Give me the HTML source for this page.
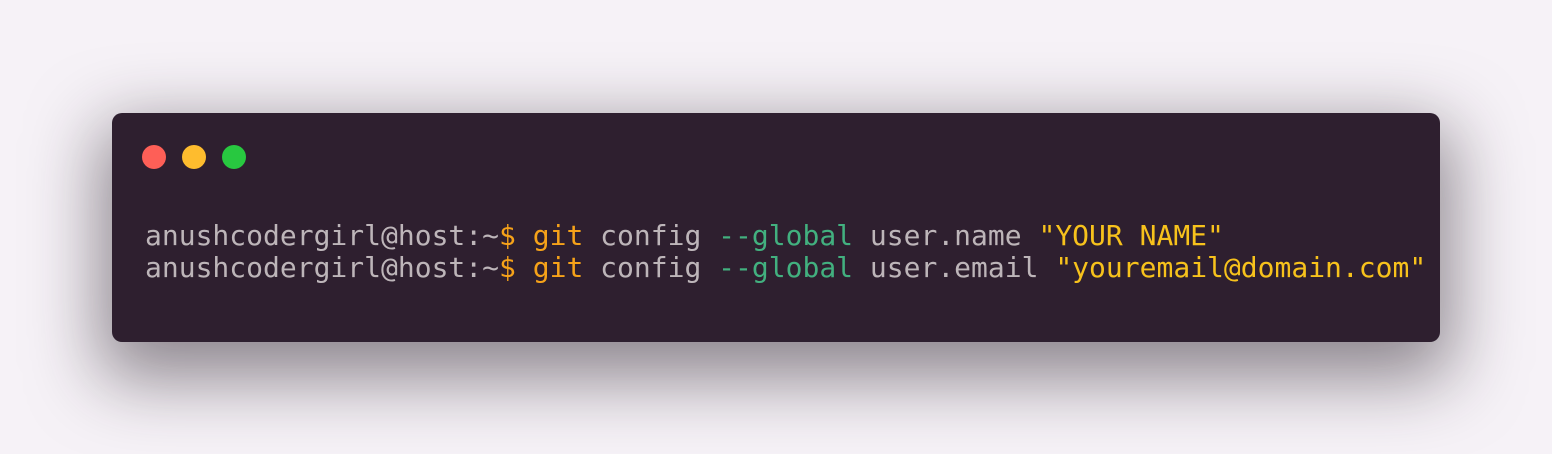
<!DOCTYPE html>
<html><head><style>
html,body{margin:0;padding:0}
body{width:1552px;height:454px;background:#f6f2f7;position:relative;overflow:hidden}
.win{position:absolute;left:112px;top:113px;width:1328px;height:229px;background:#2e1f2f;border-radius:10px;box-shadow:0 25px 70px 12px rgba(40,30,40,0.5)}
.d{position:absolute;top:145px;width:24px;height:24px;border-radius:50%}
pre{position:absolute;left:145px;top:220px;margin:0;font-family:"DejaVu Sans Mono","Liberation Mono",monospace;font-size:28px;line-height:32px;color:#bdb5b9}
.o{color:#f6a219}.g{color:#42b07f}.y{color:#f7c21c}
</style></head><body>
<div class="win"></div>
<div class="d" style="left:142px;background:#fe5f57"></div>
<div class="d" style="left:182px;background:#febc2e"></div>
<div class="d" style="left:222px;background:#28c840"></div>
<pre>anushcodergirl@host:~<span class="o">$ git</span> config <span class="g">--global</span> user.name <span class="y">"YOUR NAME"</span>
anushcodergirl@host:~<span class="o">$ git</span> config <span class="g">--global</span> user.email <span class="y">"youremail@domain.com"</span></pre>
</body></html>
